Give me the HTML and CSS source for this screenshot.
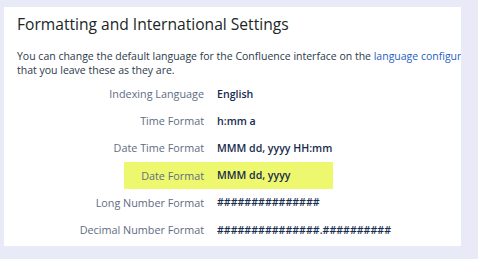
FILE: index.html
```html
<!DOCTYPE html>
<html lang="en">
<head>
    <meta charset="UTF-8">
    <title>Formatting and International Settings</title>
    <link rel="stylesheet" href="styles.css">
</head>
<body>
    <div class="panel">
        <h2>Formatting and International Settings</h2>
        <p class="intro">You can change the default language for the Confluence interface on the <a href="#">language configuration</a> screen. We recommend<br>that you leave these as they are.</p>

        <div class="settings">
            <div class="row">
                <span class="label">Indexing Language</span>
                <span class="value">English</span>
            </div>
            <div class="row">
                <span class="label">Time Format</span>
                <span class="value">h:mm a</span>
            </div>
            <div class="row">
                <span class="label">Date Time Format</span>
                <span class="value">MMM dd, yyyy HH:mm</span>
            </div>
            <div class="row highlight">
                <span class="label">Date Format</span>
                <span class="value">MMM dd, yyyy</span>
            </div>
            <div class="row">
                <span class="label">Long Number Format</span>
                <span class="value">###############</span>
            </div>
            <div class="row">
                <span class="label">Decimal Number Format</span>
                <span class="value">###############.##########</span>
            </div>
        </div>
    </div>
</body>
</html>
```

FILE: styles.css
```css
body {
    margin: 0;
    padding: 7px 17px 13px 4px;
    background-color: #e8eaf8;
    font-family: "Open Sans", "Noto Sans", sans-serif;
    color: #172b4d;
}
.panel {
    background-color: white;
    height: 239px;
    padding: 7px 0 0 13px;
    box-sizing: border-box;
    overflow: hidden;
}
h2 {
    margin: 0;
    font-size: 15.6px;
    font-weight: 500;
    color: #1a2626;
    line-height: 20px;
    white-space: nowrap;
}
.intro {
    margin: 16px 0 0 0;
    font-size: 10.5px;
    line-height: 13.5px;
    color: #2b3a4a;
    white-space: nowrap;
}
.intro a {
    color: #1f5fbf;
    text-decoration: none;
}
.settings {
    margin-top: 3px;
}
.row {
    display: flex;
    align-items: center;
    height: 27.2px;
    width: 209px;
    margin-left: 107px;
    font-size: 10.8px;
}
.label {
    width: 80px;
    flex: none;
    text-align: right;
    color: #5e6c84;
    white-space: nowrap;
    direction: rtl;
}
.value {
    padding-left: 13px;
    font-weight: 600;
    font-size: 10.6px;
    white-space: nowrap;
    color: #172b4d;
}
.highlight {
    background-color: #eef86e;
}
```
